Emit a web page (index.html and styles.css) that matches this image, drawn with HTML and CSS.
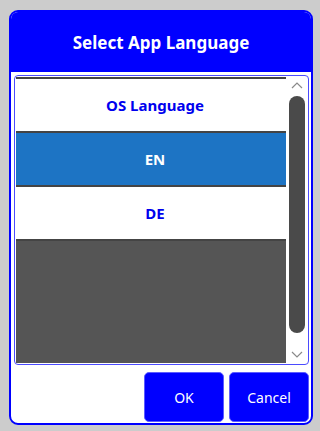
FILE: index.html
```html
<!DOCTYPE html>
<html>
<head>
<meta charset="utf-8">
<link rel="stylesheet" href="styles.css">
</head>
<body>
<div class="dialog">
  <div class="header">Select App Language</div>
  <div class="body">
    <div class="list">
      <div class="items">
        <div class="item">OS Language</div>
        <div class="item selected">EN</div>
        <div class="item last">DE</div>
      </div>
      <div class="scrollbar">
        <svg class="arrow" width="12" height="7" viewBox="0 0 12 7"><path d="M1 6 L6 1 L11 6" fill="none" stroke="#8a8a8a" stroke-width="1.2"/></svg>
        <div class="track"><div class="thumb"></div></div>
        <svg class="arrow" width="12" height="7" viewBox="0 0 12 7"><path d="M1 1 L6 6 L11 1" fill="none" stroke="#8a8a8a" stroke-width="1.2"/></svg>
      </div>
    </div>
    <div class="buttons">
      <button class="btn">OK</button>
      <button class="btn">Cancel</button>
    </div>
  </div>
</div>
</body>
</html>
```
FILE: styles.css
```css
html, body {
  margin: 0;
  padding: 0;
  background: #cccccc;
  width: 317px;
  height: 431px;
  overflow: hidden;
}
body {
  font-family: "Noto Sans", "Open Sans", sans-serif;
  padding-top: 10px;
  padding-left: 9px;
  box-sizing: border-box;
}
.dialog {
  width: 304px;
  height: 415px;
  box-sizing: border-box;
  border: 2px solid #0000ff;
  border-radius: 9px;
  background: #ffffff;
  display: flex;
  flex-direction: column;
  overflow: hidden;
}
.header {
  height: 60px;
  flex: none;
  background: #0000ff;
  color: #ffffff;
  font-weight: bold;
  font-size: 17px;
  display: flex;
  align-items: center;
  justify-content: center;
  margin-top: -2px;
  padding-top: 2px;
}
.body {
  flex: 1;
  display: flex;
  flex-direction: column;
  padding: 3px 2px 1px 3px;
}
.list {
  height: 290px;
  box-sizing: border-box;
  border: 1px solid #4b4bff;
  border-radius: 4px;
  padding: 1px 0 1px 1px;
  display: flex;
}
.items {
  width: 270px;
  background: #555555;
  display: flex;
  flex-direction: column;
}
.item {
  height: 52px;
  border-top: 2px solid #444444;
  background: #ffffff;
  color: #0000ee;
  font-weight: bold;
  font-size: 15px;
  display: flex;
  align-items: center;
  justify-content: center;
  padding-left: 8px;
}
.item.selected {
  background: #1d74c4;
  color: #ffffff;
}
.item.last {
  border-bottom: 2px solid #444444;
}
.scrollbar {
  flex: 1;
  display: flex;
  flex-direction: column;
  align-items: center;
  padding-top: 5px;
  padding-bottom: 5px;
}
.arrow {
  display: block;
  flex: none;
}
.track {
  flex: 1;
  width: 16px;
  padding: 7px 0 18px;
  display: flex;
}
.thumb {
  flex: 1;
  background: #4a4a4a;
  border-radius: 8px;
}
.buttons {
  margin-top: 7px;
  display: flex;
  justify-content: flex-end;
  gap: 5px;
}
.btn {
  width: 80px;
  height: 50px;
  background: #0000ff;
  border: 1px solid #5c5cff;
  border-radius: 5px;
  color: #ffffff;
  font-family: "Noto Sans", "Open Sans", sans-serif;
  font-size: 14px;
  padding: 0;
}
```
